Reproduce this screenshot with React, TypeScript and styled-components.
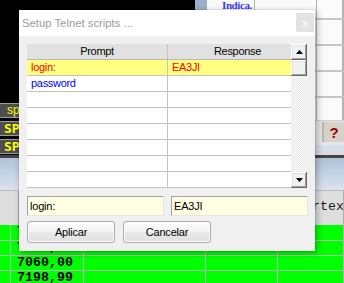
import React from "react";
import styled, { createGlobalStyle } from "styled-components";

const GlobalStyle = createGlobalStyle`
  html, body { margin: 0; padding: 0; }
  body { background: #000; font-family: "Liberation Sans", Arial, sans-serif; overflow: hidden; }
  * { box-sizing: border-box; }
`;

const Screen = styled.div`
  position: relative;
  width: 344px;
  height: 283px;
  overflow: hidden;
  display: flex;
  flex-direction: column;
  background: #000;
`;

/* ---------- background application ---------- */
const TopArea = styled.div`
  display: grid;
  grid-template-columns: 195px 1fr;
  height: 155px;
  flex-shrink: 0;
`;

const LeftPanel = styled.div`
  background: #000;
  display: flex;
  flex-direction: column;
  justify-content: flex-end;
  gap: 3px;
  padding-bottom: 1px;
`;

const SideButton = styled.div<{ $small?: boolean }>`
  height: 15px;
  background: #4e4e4e;
  border-top: 1px solid #9c9c9c;
  border-bottom: 1px solid #9c9c9c;
  color: #ffff00;
  font-family: ${(p) => (p.$small ? '"Liberation Sans", Arial, sans-serif' : '"DejaVu Sans Mono", monospace')};
  font-size: ${(p) => (p.$small ? "12px" : "13px")};
  font-weight: ${(p) => (p.$small ? 400 : 700)};
  line-height: 13px;
  padding-left: ${(p) => (p.$small ? "7px" : "4px")};
`;

const RightPanel = styled.div`
  display: grid;
  grid-template-columns: 12px 1fr;
`;

const Splitter = styled.div`
  background: linear-gradient(#9db1c9, #8ea2ba);
`;

const TablePane = styled.div`
  display: flex;
  flex-direction: column;
  background: #fff;
`;

const TableRow = styled.div<{ $h: number; $first?: boolean }>`
  display: grid;
  grid-template-columns: 48px 62px 26px 1fr;
  height: ${(p) => p.$h}px;
  border-top: ${(p) => (p.$first ? "none" : "2px solid #c6c6c6")};
  flex-shrink: 0;
`;

const TableCell = styled.div`
  border-right: 1px solid #b4b4b4;
  background: #fbfbfb;
  overflow: hidden;
`;

const IndicaCell = styled(TableCell)`
  padding-left: 15px;
  font-family: "Liberation Serif", "Times New Roman", serif;
  font-weight: 700;
  font-size: 11px;
  letter-spacing: -0.4px;
  line-height: 10px;
  color: #3b3bff;
`;

const Toolbar = styled.div`
  height: 25px;
  flex-shrink: 0;
  background: #e6e6e6;
  display: flex;
  justify-content: flex-end;
  border-top: 1px solid #cfcfcf;
`;

const HelpButton = styled.div`
  width: 22px;
  margin: 1px 0 3px;
  background: #d6d2ca;
  border-left: 2px solid #b8b8b8;
  color: #990000;
  font-family: "Liberation Sans", Arial, sans-serif;
  font-weight: 700;
  font-size: 15px;
  display: flex;
  align-items: center;
  justify-content: center;
`;

const PaleStrip = styled.div`
  flex: 1;
  background: linear-gradient(#d2e0f1 0 50%, #dcdcdc 50% 100%);
`;

const DarkLine = styled.div`
  height: 3px;
  flex-shrink: 0;
  background: #454545;
`;

const BlueBand = styled.div`
  height: 32px;
  flex-shrink: 0;
  background: linear-gradient(#afc3db, #dbe3ec);
`;

const SheetHeader = styled.div`
  height: 35px;
  flex-shrink: 0;
  display: grid;
  grid-template-columns: 7px 77px 122px 72px 1fr;
  background: #dedede;
  border-top: 1px solid #b8b8b8;
`;

const SheetHeadCell = styled.div`
  border-right: 1px solid #b0b0b0;
  padding: 8px 0 0 18px;
  font-family: "Liberation Mono", "Courier New", monospace;
  font-size: 13.3px;
  line-height: 15px;
  color: #1a1a1a;
  white-space: nowrap;
  overflow: hidden;
`;

const SheetRow = styled.div<{ $first?: boolean }>`
  height: 15px;
  flex-shrink: 0;
  display: grid;
  grid-template-columns: 7px 77px 122px 72px 1fr;
  background: #00ff00;
  border-top: ${(p) => (p.$first ? "none" : "1px solid #b4b4b4")};
`;

const SheetCell = styled.div`
  border-right: 1px solid #b4b4b4;
  padding-left: 10px;
  font-family: "Liberation Mono", "Courier New", monospace;
  font-weight: 700;
  font-size: 13.3px;
  line-height: 14px;
  color: #000;
  white-space: nowrap;
  overflow: hidden;
`;

/* ---------- dialog ---------- */
const Dialog = styled.div`
  position: absolute;
  left: 19px;
  top: 10px;
  width: 296px;
  height: 241px;
  background: #f0f0f0;
  box-shadow: 0 0 0 1px rgba(0, 0, 0, 0.06), 2px 2px 7px rgba(0, 0, 0, 0.3);
  display: flex;
  flex-direction: column;
  font-family: "Liberation Sans", Arial, sans-serif;
`;

const TitleBar = styled.div`
  height: 26px;
  flex-shrink: 0;
  background: #fff;
  display: flex;
  align-items: center;
  padding-left: 3px;
`;

const Title = styled.div`
  font-size: 11.3px;
  color: #9c9c9c;
  line-height: 13px;
`;

const CloseButton = styled.div`
  align-self: flex-start;
  margin: 3px 1px 0 auto;
  width: 18px;
  height: 19px;
  background: #e3e3e3;
  color: #f6f6f6;
  font-size: 11px;
  font-weight: 700;
  display: flex;
  align-items: center;
  justify-content: center;
`;

const DialogBody = styled.div`
  padding: 8px 8px 0 8px;
  display: flex;
  flex-direction: column;
`;

const GridFrame = styled.div`
  display: flex;
  height: 144px;
`;

const Grid = styled.div`
  width: 264px;
  background: #fff;
  display: flex;
  flex-direction: column;
  font-size: 11px;
  letter-spacing: -0.3px;
`;

const GridHeader = styled.div`
  height: 16px;
  flex-shrink: 0;
  display: grid;
  grid-template-columns: 141px 1fr;
  background: #e1e1e1;
  border-bottom: 1px solid #b9b9b9;
  line-height: 15px;
  color: #000;
`;

const HeaderCell = styled.div<{ $shift?: boolean }>`
  text-align: center;
  padding-left: ${(p) => (p.$shift ? "16px" : "0")};
  border-right: ${(p) => (p.$shift ? "none" : "1px solid #c3c3c3")};
`;

const GridRow = styled.div<{ $hl?: boolean }>`
  height: 16px;
  flex-shrink: 0;
  display: grid;
  grid-template-columns: 141px 1fr;
  background: ${(p) => (p.$hl ? "#ffff80" : "#fff")};
  border-bottom: 1px solid #c3c3c3;
  line-height: 15px;
`;

const RowCell = styled.div<{ $color?: string; $last?: boolean }>`
  padding-left: 4px;
  color: ${(p) => p.$color || "#000"};
  border-right: ${(p) => (p.$last ? "none" : "1px solid #c3c3c3")};
  white-space: nowrap;
  overflow: hidden;
`;

const ScrollBar = styled.div`
  width: 16px;
  display: flex;
  flex-direction: column;
`;

const ScrollButton = styled.div`
  height: 16px;
  flex-shrink: 0;
  background: #f0f0f0;
  box-shadow: inset -1px -1px #696969, inset 1px 1px #fff, inset -2px -2px #a0a0a0, inset 2px 2px #e3e3e3;
  display: flex;
  align-items: center;
  justify-content: center;
`;

const Track = styled.div`
  flex: 1;
  background: repeating-conic-gradient(#e6e6e6 0 25%, #ffffff 0 50%) 0 0 / 2px 2px;
`;

const FieldRow = styled.div`
  margin-top: 8px;
  display: flex;
  gap: 7px;
`;

const Field = styled.div`
  flex-shrink: 0;
  width: 137px;
  height: 20px;
  border: 1px solid;
  border-color: #a3a3a3 #e6e6e6 #e6e6e6 #a3a3a3;
  background: #ffffe4;
  padding-left: 2px;
  font-size: 11px;
  letter-spacing: -0.2px;
  line-height: 18px;
  color: #000;
`;

const ButtonRow = styled.div`
  margin-top: 5px;
  display: flex;
  gap: 8px;
`;

const PushButton = styled.div`
  width: 88px;
  height: 22px;
  border: 1px solid #acacac;
  border-radius: 3px;
  background: linear-gradient(#fdfdfd, #f3f3f3 50%, #e9e9e9 50%, #e0e0e0);
  box-shadow: inset 0 0 0 1px #fcfcfc;
  font-size: 11px;
  letter-spacing: -0.2px;
  color: #000;
  display: flex;
  align-items: center;
  justify-content: center;
`;

const Arrow = ({ down }: { down?: boolean }) => (
  <svg width="7" height="4" viewBox="0 0 7 4">
    <polygon points={down ? "0,0 7,0 3.5,4" : "0,4 7,4 3.5,0"} fill="#000" />
  </svg>
);

const rows: { p: string; r: string; color?: string; hl?: boolean }[] = [
  { p: "login:", r: "EA3JI", color: "#ff0000", hl: true },
  { p: "password", r: "", color: "#0000ff" },
  { p: "", r: "" },
  { p: "", r: "" },
  { p: "", r: "" },
  { p: "", r: "" },
  { p: "", r: "" },
  { p: "", r: "" },
];

const sheet = ["7150,00", "7109,99", "7060,00", "7198,99"];

export default function App() {
  return (
    <>
      <GlobalStyle />
      <Screen>
        <TopArea>
          <LeftPanel>
            <SideButton $small>sp</SideButton>
            <SideButton>SP</SideButton>
            <SideButton>SP</SideButton>
          </LeftPanel>
          <RightPanel>
            <Splitter />
            <TablePane>
              <TableRow $h={18} $first>
                <IndicaCell>Indica.</IndicaCell>
                <TableCell />
                <TableCell />
                <TableCell />
              </TableRow>
              {[26, 26, 26, 24].map((h, i) => (
                <TableRow key={i} $h={h}>
                  <TableCell />
                  <TableCell />
                  <TableCell />
                  <TableCell />
                </TableRow>
              ))}
              <Toolbar>
                <HelpButton>?</HelpButton>
              </Toolbar>
              <PaleStrip />
            </TablePane>
          </RightPanel>
        </TopArea>
        <DarkLine />
        <BlueBand />
        <SheetHeader>
          <SheetHeadCell />
          <SheetHeadCell />
          <SheetHeadCell />
          <SheetHeadCell />
          <SheetHeadCell>Vertex</SheetHeadCell>
        </SheetHeader>
        {sheet.map((v, i) => (
          <SheetRow key={i} $first={i === 0}>
            <SheetCell />
            <SheetCell>{v}</SheetCell>
            <SheetCell />
            <SheetCell />
            <SheetCell />
          </SheetRow>
        ))}

        <Dialog>
          <TitleBar>
            <Title>Setup Telnet scripts ...</Title>
            <CloseButton>x</CloseButton>
          </TitleBar>
          <DialogBody>
            <GridFrame>
              <Grid>
                <GridHeader>
                  <HeaderCell>Prompt</HeaderCell>
                  <HeaderCell $shift>Response</HeaderCell>
                </GridHeader>
                {rows.map((r, i) => (
                  <GridRow key={i} $hl={r.hl}>
                    <RowCell $color={r.color}>{r.p}</RowCell>
                    <RowCell $color={r.color} $last>
                      {r.r}
                    </RowCell>
                  </GridRow>
                ))}
              </Grid>
              <ScrollBar>
                <ScrollButton>
                  <Arrow />
                </ScrollButton>
                <ScrollButton />
                <Track />
                <ScrollButton>
                  <Arrow down />
                </ScrollButton>
              </ScrollBar>
            </GridFrame>
            <FieldRow>
              <Field>login:</Field>
              <Field>EA3JI</Field>
            </FieldRow>
            <ButtonRow>
              <PushButton>Aplicar</PushButton>
              <PushButton>Cancelar</PushButton>
            </ButtonRow>
          </DialogBody>
        </Dialog>
      </Screen>
    </>
  );
}
